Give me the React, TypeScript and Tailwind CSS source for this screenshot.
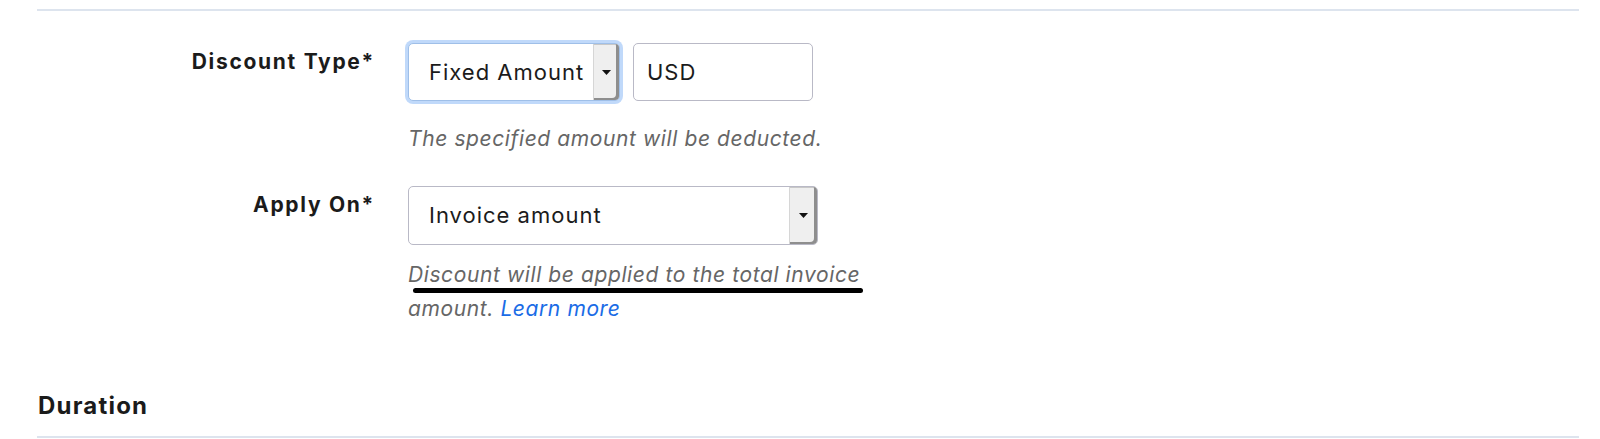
import React from "react";

function Caret() {
  return (
    <svg width="9" height="5" viewBox="0 0 9 5" className="block">
      <path d="M0 0 L9 0 L4.5 5 Z" fill="#111" />
    </svg>
  );
}

function SelectButton({ w }: { w: string }) {
  return (
    <div
      className={`${w} self-stretch flex items-center justify-center bg-[#efefef] border-l border-[#d6d6d6] rounded-r-[4px] shadow-[inset_-3px_-2px_0_#8e8e8e,inset_0_1px_0_#c8c8c8]`}
    >
      <Caret />
    </div>
  );
}

export default function App() {
  return (
    <div
      className="w-[1600px] h-[439px] bg-white pt-[9px] overflow-hidden text-[#1b1b1b]"
      style={{ fontFamily: "Inter, 'Noto Sans', sans-serif" }}
    >
      <div className="h-[2px] bg-[#dde4ee] ml-[37px] mr-[21px]" />

      {/* Discount Type */}
      <div className="grid grid-cols-[338px_1fr] gap-x-[33px] mt-[32px] ml-[37px]">
        <div className="text-right pt-[7px] text-[21px] leading-[24px] font-bold tracking-[1.7px]">Discount Type*</div>
        <div>
          <div className="flex gap-[13px]">
            <div className="w-[212px] h-[58px] flex items-stretch rounded-[5px] border border-[#9fbfe8] shadow-[0_0_0_3px_rgba(140,185,245,0.55)] bg-white">
              <div className="flex-1 flex items-center pl-[20px] text-[22px] tracking-[1px] whitespace-nowrap">Fixed Amount</div>
              <SelectButton w="w-[26px]" />
            </div>
            <div className="w-[180px] h-[58px] rounded-[5px] border border-[#b9b9c6] flex items-center pl-[13px] text-[22px] tracking-[1px]">
              USD
            </div>
          </div>
          <div className="mt-[25px] text-[21px] leading-[26px] italic text-[#666] tracking-[0.6px]">
            The specified amount will be deducted.
          </div>
        </div>
      </div>

      {/* Apply On */}
      <div className="grid grid-cols-[338px_1fr] gap-x-[33px] mt-[34px] ml-[37px]">
        <div className="text-right pt-[7px] text-[21px] leading-[24px] font-bold tracking-[1.7px]">Apply On*</div>
        <div>
          <div className="w-[410px] h-[59px] flex items-stretch rounded-[5px] border border-[#b9b9c6] bg-white">
            <div className="flex-1 flex items-center pl-[20px] text-[22px] tracking-[1px]">Invoice amount</div>
            <SelectButton w="w-[28px]" />
          </div>
          <div className="relative mt-[13px] text-[21px] leading-[34px] italic text-[#666] tracking-[0.6px]">
            <div>Discount will be applied to the total invoice</div>
            <div className="flex">
              <span>amount.&nbsp;</span>
              <span className="text-[#1a6ce6]">Learn more</span>
            </div>
            <div className="absolute left-[5px] top-[30px] w-[450px] h-[5px] rounded-full bg-black" />
          </div>
        </div>
      </div>

      {/* Duration */}
      <div className="ml-[38px] mt-[66px] text-[24px] leading-[28px] font-bold tracking-[1.2px]">Duration</div>
      <div className="h-[2px] bg-[#dde4ee] ml-[37px] mr-[21px] mt-[16px]" />
    </div>
  );
}
